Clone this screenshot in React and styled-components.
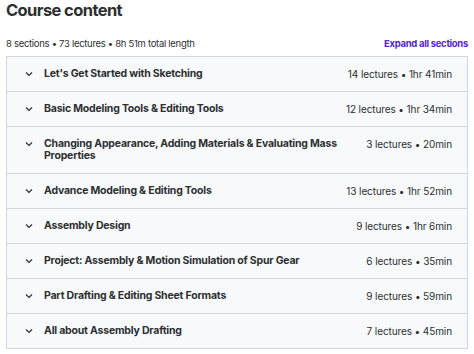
import React from "react";
import styled, { createGlobalStyle } from "styled-components";

const Global = createGlobalStyle`
  html, body { margin: 0; padding: 0; background: #fff; }
  body { font-family: Inter, "Noto Sans", sans-serif; color: #2d2f31; }
`;

const Page = styled.div`
  padding: 0 6px;
`;

const Heading = styled.h2`
  margin: 0;
  font-size: 16.5px;
  line-height: 21px;
  font-weight: 700;
  letter-spacing: -0.6px;
`;

const SummaryBar = styled.div`
  display: flex;
  justify-content: space-between;
  align-items: center;
  margin-top: 15px;
  height: 14px;
  margin-bottom: 6px;
`;

const Summary = styled.span`
  font-size: 9.5px;
  letter-spacing: -0.3px;
`;

const ExpandButton = styled.button`
  border: 0;
  background: none;
  padding: 0;
  font-family: inherit;
  font-size: 9.5px;
  font-weight: 700;
  letter-spacing: -0.3px;
  color: #5624d0;
  cursor: pointer;
`;

const List = styled.div`
  border: 1px solid #d1d7dc;
  border-bottom: 0;
`;

const Row = styled.div`
  display: flex;
  align-items: flex-start;
  background: #f7f9fa;
  border-bottom: 1px solid #d1d7dc;
  padding: 11px 15px 11px 18px;
`;

const Chevron = styled.svg`
  flex: none;
  width: 8px;
  height: 8px;
  margin: 2px 11px 0 0;
`;

const Title = styled.span`
  flex: 1;
  font-size: 10.5px;
  line-height: 12px;
  font-weight: 700;
  letter-spacing: -0.2px;
  padding-right: 12px;
`;

const Meta = styled.span`
  flex: none;
  font-size: 10px;
  line-height: 12px;
  letter-spacing: -0.1px;
`;

const sections = [
  ["Let's Get Started with Sketching", "14 lectures • 1hr 41min"],
  ["Basic Modeling Tools & Editing Tools", "12 lectures • 1hr 34min"],
  ["Changing Appearance, Adding Materials & Evaluating Mass Properties", "3 lectures • 20min"],
  ["Advance Modeling & Editing Tools", "13 lectures • 1hr 52min"],
  ["Assembly Design", "9 lectures • 1hr 6min"],
  ["Project: Assembly & Motion Simulation of Spur Gear", "6 lectures • 35min"],
  ["Part Drafting & Editing Sheet Formats", "9 lectures • 59min"],
  ["All about Assembly Drafting", "7 lectures • 45min"],
];

export default function App() {
  return (
    <Page>
      <Global />
      <Heading>Course content</Heading>
      <SummaryBar>
        <Summary>8 sections • 73 lectures • 8h 51m total length</Summary>
        <ExpandButton>Expand all sections</ExpandButton>
      </SummaryBar>
      <List>
        {sections.map(([t, m]) => (
          <Row key={t}>
            <Chevron viewBox="0 0 8 8">
              <path d="M1 2.5 L4 5.5 L7 2.5" fill="none" stroke="#2d2f31" strokeWidth="1.2" />
            </Chevron>
            <Title>{t}</Title>
            <Meta>{m}</Meta>
          </Row>
        ))}
      </List>
    </Page>
  );
}
